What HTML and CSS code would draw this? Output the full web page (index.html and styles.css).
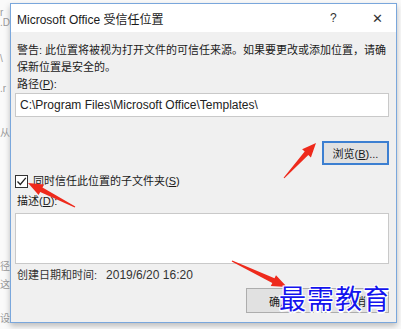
FILE: index.html
```html
<!DOCTYPE html>
<html lang="zh-CN">
<head>
  <meta charset="UTF-8" />
  <title>Microsoft Office 受信任位置</title>
  <link rel="stylesheet" href="styles.css">
</head>
<body>
  <div class="side">
    <span class="frag f1">r</span>
    <span class="frag f2">.D</span>
    <span class="frag f3">\</span>
    <span class="frag f4">.r</span>
    <span class="frag f5">从</span>
    <span class="frag f6">径</span>
    <span class="frag f7">这</span>
    <span class="frag f8">设</span>
  </div>

  <div class="dialog">
    <div class="titlebar">
      <span class="title">Microsoft Office 受信任位置</span>
      <span class="help">?</span>
      <span class="close">✕</span>
    </div>
    <div class="body">
      <p class="warn">警告: 此位置将被视为打开文件的可信任来源。如果要更改或添加位置，请确保新位置是安全的。</p>
      <label class="label">路径(<u>P</u>):</label>
      <div class="input">C:\Program Files\Microsoft Office\Templates\</div>
      <div class="browse-row">
        <button class="btn btn-focus">浏览(<u>B</u>)...</button>
      </div>
      <div class="check-row">
        <span class="checkbox">
          <svg width="11" height="11" viewBox="0 0 11 11"><path d="M1.5 5.5 L4.3 8.5 L9.8 1.8" fill="none" stroke="#222" stroke-width="1.3"/></svg>
        </span>
        <span>同时信任此位置的子文件夹(<u>S</u>)</span>
      </div>
      <label class="label desc">描述(<u>D</u>):</label>
      <div class="textarea"></div>
      <div class="date-row">
        <span>创建日期和时间:</span>
        <span class="date">2019/6/20 16:20</span>
      </div>
      <div class="actions">
        <button class="btn">确定</button>
        <button class="btn">取消</button>
      </div>
    </div>
  </div>

  <svg class="arrows" width="401" height="329" viewBox="0 0 401 329">
    <polygon points="284.4,178.3 308.3,155.0 310.9,157.4 316,143 302.1,149.3 304.7,151.6 283.6,177.7"/>
    <polygon points="75.3,206.4 42.5,187.6 44.1,184.5 28,183 38.6,195.1 40.2,192.0 74.7,207.6"/>
    <polygon points="231.7,261.6 272.3,282.9 270.8,286.0 287,287 276.0,275.2 274.5,278.3 232.3,260.4"/>
  </svg>

  <div class="watermark">最需教育</div>
</body>
</html>
```

FILE: styles.css
```css
body {
  margin: 0;
  width: 401px;
  height: 329px;
  overflow: hidden;
  background: #fafafa;
  display: flex;
  position: relative;
  font-family: "Liberation Sans", "Noto Sans CJK SC", sans-serif;
  font-size: 11px;
  color: #1a1a1a;
}
.side {
  width: 10px;
  display: flex;
  flex-direction: column;
  color: #9a9a9a;
  font-size: 10px;
  line-height: 10px;
}
.frag { display: block; }
.f1 { margin-top: 8px; }
.f2 { margin-top: 0; }
.f3 { margin-top: 26px; }
.f4 { margin-top: 20px; }
.f5 { margin-top: 34px; }
.f6 { margin-top: 124px; }
.f7 { margin-top: 8px; }
.f8 { margin-top: 24px; }

.dialog {
  width: 385px;
  height: 318px;
  margin-top: 3px;
  border: 1px solid #7aa7dc;
  background: #f0f0f0;
  box-shadow: 0 3px 6px rgba(0, 0, 0, 0.25);
  display: flex;
  flex-direction: column;
}
.titlebar {
  height: 28px;
  background: #fff;
  display: flex;
  align-items: center;
  padding-left: 6px;
}
.title {
  flex: 1;
  font-size: 12px;
}
.help {
  width: 14px;
  font-size: 12px;
  margin-right: 28px;
  color: #333;
}
.close {
  width: 24px;
  font-size: 13px;
  color: #333;
}
.body {
  flex: 1;
  padding: 10px 5px 0 4px;
  display: flex;
  flex-direction: column;
}
.warn {
  margin: 0 0 0 2px;
  line-height: 17px;
}
.label {
  display: block;
  line-height: 17px;
  margin-left: 2px;
}
.input {
  height: 22px;
  margin-right: 2px;
  border: 1px solid #c9c9c9;
  background: #fff;
  font-size: 12px;
  line-height: 22px;
  padding-left: 4px;
  font-family: "Liberation Sans", sans-serif;
  color: #222;
}
.browse-row {
  display: flex;
  justify-content: flex-end;
  margin: 24px 2px 0 0;
}
.btn {
  height: 25px;
  width: 68px;
  border: 1px solid #adadad;
  background: #e1e1e1;
  font-family: "Liberation Sans", "Noto Sans CJK SC", sans-serif;
  font-size: 11px;
  color: #1a1a1a;
  padding: 0;
}
.btn-focus {
  width: 67px;
  height: 24px;
  border: 2px solid #3c7fd1;
}
.check-row {
  display: flex;
  align-items: center;
  gap: 5px;
  margin-top: 8px;
  line-height: 16px;
}
.checkbox {
  width: 11px;
  height: 11px;
  border: 1px solid #333;
  background: #fff;
  display: flex;
}
.desc { margin-top: 4px; }
.textarea {
  margin: 3px 2px 0 0;
  height: 49px;
  border: 1px solid #c9c9c9;
  background: #fff;
}
.date-row {
  display: flex;
  line-height: 17px;
  margin: 3px 0 0 2px;
  color: #333;
}
.date {
  margin-left: 9px;
  font-size: 12px;
}
.actions {
  display: flex;
  justify-content: flex-end;
  gap: 7px;
  margin: 4px 2px 0 0;
}

.arrows {
  position: absolute;
  left: 0;
  top: 0;
  fill: #ee2a1c;
}
.watermark {
  position: absolute;
  left: 279px;
  top: 281px;
  font-family: "Noto Sans CJK SC", sans-serif;
  font-size: 27px;
  letter-spacing: 1px;
  line-height: 34px;
  color: #1414ee;
  text-shadow: 1px 1px 0 #fff, -1px -1px 0 #fff, 1px -1px 0 #fff, -1px 1px 0 #fff, 0 2px 0 #fff;
}
```
